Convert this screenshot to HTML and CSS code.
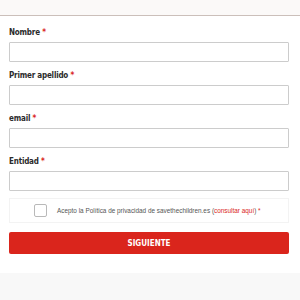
FILE: index.html
```html
<!DOCTYPE html>
<html lang="es">
<head>
    <meta charset="UTF-8">
    <meta name="viewport" content="width=device-width, initial-scale=1.0">
    <title>Formulario</title>
    <link rel="stylesheet" href="styles.css">
</head>
<body>
    <div class="top-band"></div>

    <form class="signup-form" onsubmit="return false;">
        <div class="field">
            <label class="field-label" for="nombre">Nombre <span class="req">*</span></label>
            <input class="field-input" id="nombre" type="text">
        </div>
        <div class="field">
            <label class="field-label" for="apellido">Primer apellido <span class="req">*</span></label>
            <input class="field-input" id="apellido" type="text">
        </div>
        <div class="field">
            <label class="field-label" for="email">email <span class="req">*</span></label>
            <input class="field-input" id="email" type="email">
        </div>
        <div class="field">
            <label class="field-label" for="entidad">Entidad <span class="req">*</span></label>
            <input class="field-input" id="entidad" type="text">
        </div>

        <div class="consent">
            <span class="consent-box"></span>
            <span class="consent-text">Acepto la Política de privacidad de savethechildren.es (<a href="#" class="consent-link">consultar aquí</a>) <span class="req">*</span></span>
        </div>

        <button class="btn-next" type="submit">SIGUIENTE</button>
    </form>

    <div class="bottom-band"></div>
</body>
</html>
```

FILE: styles.css
```css
* {
    margin: 0;
    padding: 0;
    box-sizing: border-box;
}

body {
    font-family: 'Liberation Sans', Arial, sans-serif;
    background: #ffffff;
    width: 300px;
    height: 300px;
    overflow: hidden;
}

.top-band {
    height: 16px;
    background: #fbf9f8;
    border-bottom: 1px solid #cbbfba;
}

.signup-form {
    padding: 12px 11px 0 9px;
}

.field {
    margin-bottom: 9px;
}

.field-label {
    display: block;
    font-family: 'Liberation Sans Narrow', 'DejaVu Sans Condensed', sans-serif;
    font-weight: 700;
    font-size: 8px;
    line-height: 10px;
    letter-spacing: -0.2px;
    color: #2b2b2b;
    margin-bottom: 4px;
}

.req {
    color: #d9261c;
}

.field-input {
    display: block;
    width: 100%;
    height: 20px;
    border: 1px solid #cccccc;
    border-radius: 1px;
    background: #ffffff;
}

.consent {
    display: flex;
    align-items: center;
    height: 25px;
    margin-top: -2px;
    padding-left: 24px;
    border: 1px solid #f3f3f3;
}

.consent-box {
    width: 13px;
    height: 13px;
    border: 1px solid #b9b9b9;
    border-radius: 2px;
    margin-right: 10px;
    flex-shrink: 0;
}

.consent-text {
    font-size: 6.4px;
    color: #555555;
    white-space: nowrap;
}

.consent-link {
    color: #d9261c;
    text-decoration: none;
}

.btn-next {
    display: block;
    width: 100%;
    height: 22px;
    margin-top: 9px;
    background: #da251c;
    border: none;
    border-radius: 2px;
    color: #ffffff;
    font-family: 'Liberation Sans Narrow', 'DejaVu Sans Condensed', sans-serif;
    font-weight: 700;
    font-size: 8px;
    cursor: pointer;
}

.bottom-band {
    margin-top: 19px;
    height: 30px;
    background: #f8f8f8;
}
```
